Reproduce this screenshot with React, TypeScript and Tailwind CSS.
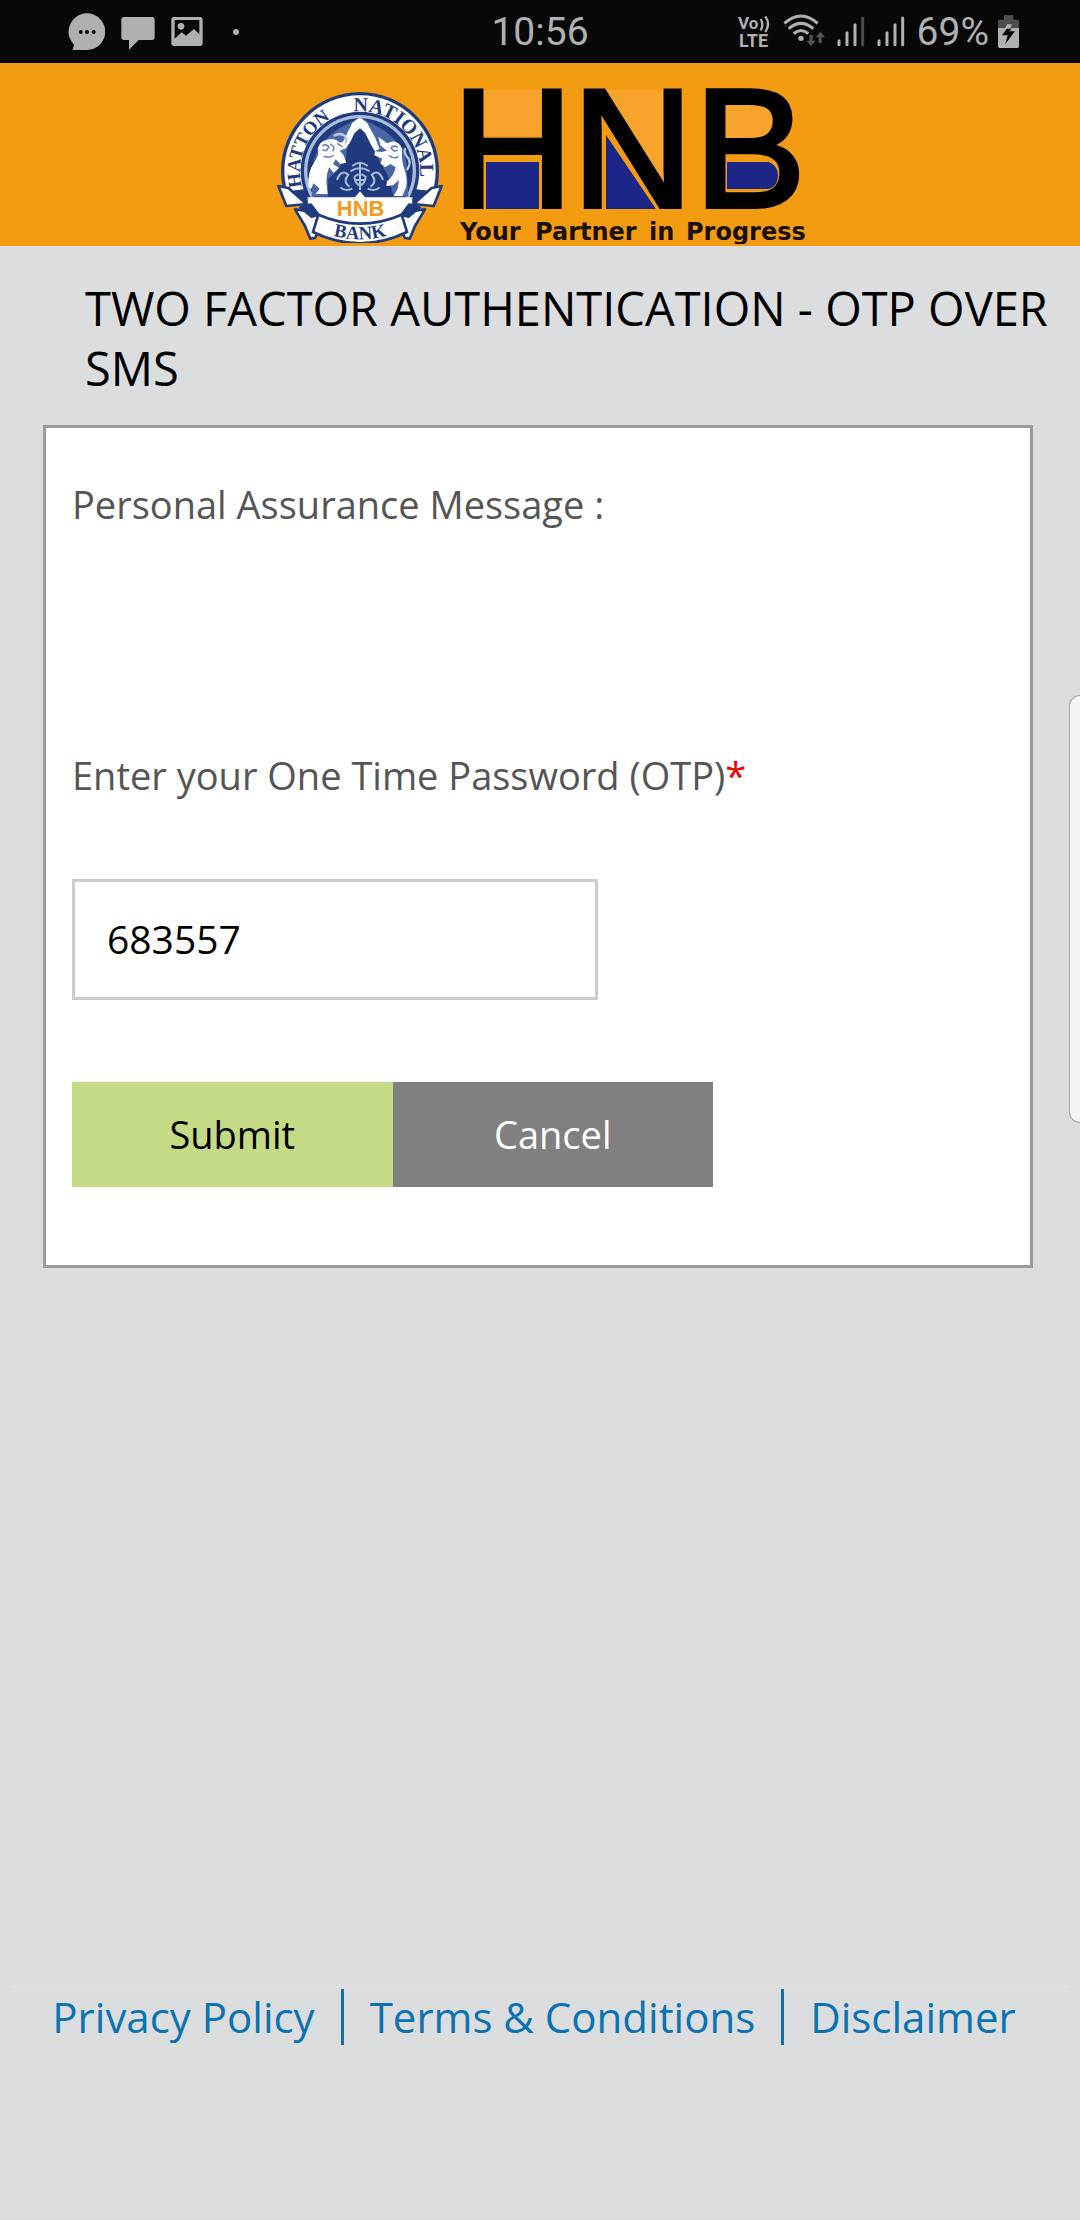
import React from "react";

const NAVY = "#1f3a7d";

function ChatBubbleIcon() {
  return (
    <svg className="h-[63px] w-[37px]" viewBox="84 0 111 189" aria-hidden="true">
      <path d="M98 150 L102 134 A55 55 0 1 1 140 150 Z" fill="#b0b0b0" />
      <circle cx="122" cy="96" r="6" fill="#080808" />
      <circle cx="141" cy="96" r="6" fill="#080808" />
      <circle cx="161" cy="96" r="6" fill="#080808" />
    </svg>
  );
}

function MessageIcon() {
  return (
    <svg className="h-[63px] w-[34px]" viewBox="240 0 102 189" aria-hidden="true">
      <path d="M249 51 H333 Q341 51 341 59 V112 Q341 120 333 120 H293 L264 149 V120 H249 Q241 120 241 112 V59 Q241 51 249 51 Z" fill="#b0b0b0" />
    </svg>
  );
}

function PictureIcon() {
  return (
    <svg className="h-[63px] w-[32px]" viewBox="393 0 96 189" aria-hidden="true">
      <path
        fillRule="evenodd"
        fill="#b0b0b0"
        d="M402 51 H480 Q488 51 488 59 V130 Q488 138 480 138 H402 Q394 138 394 130 V59 Q394 51 402 51 Z M404 60 V116 L425 97 L438 107 L462 87 L478 103 V60 Z"
      />
      <circle cx="423" cy="79" r="10" fill="#b0b0b0" />
    </svg>
  );
}

function VolteIcon() {
  return (
    <svg className="h-[63px] w-[33px]" viewBox="54 0 99 189" role="img" aria-label="VoLTE">
      <g fill="#b0b0b0" fontFamily="Roboto, sans-serif" fontWeight="700">
        <text x="54" y="87" fontSize="51">Vo</text>
        <text x="57" y="141" fontSize="54">LTE</text>
      </g>
      <path d="M122 57 Q132 74 122 91 M136 49 Q152 72 136 96" fill="none" stroke="#b0b0b0" strokeWidth="7" />
    </svg>
  );
}

function WifiIcon() {
  return (
    <svg className="h-[63px] w-[42px]" viewBox="196 0 126 189" aria-hidden="true">
      <g fill="none" stroke="#b0b0b0" strokeWidth="9">
        <path d="M200 70 Q250 26 300 70" />
        <path d="M213 86 Q250 54 287 86" />
        <path d="M228 101 Q250 82 272 101" />
      </g>
      <circle cx="250" cy="115" r="8" fill="#b0b0b0" />
      <path d="M276 105 H285 V122 H294 L280 138 L266 122 H276 Z M303 129 H312 V112 H322 L308 95 L294 112 H303 Z" fill="#555" />
    </svg>
  );
}

function SignalIcon({ last }: { last: string }) {
  return (
    <svg className="h-[63px] w-[28px]" viewBox="347 0 84 189" aria-hidden="true">
      <g strokeWidth="9" strokeLinecap="round" stroke="#b0b0b0">
        <path d="M353 122 V134" />
        <path d="M377 98 V134" />
        <path d="M401 74 V134" />
        <path d="M424 54 V134" stroke={last} />
      </g>
    </svg>
  );
}

function BatteryIcon() {
  return (
    <svg className="h-[63px] w-[21px]" viewBox="831 0 63 189" aria-hidden="true">
      <path d="M849 45 H877 V59 H890 Q894 59 894 63 V84 H831 V63 Q831 59 835 59 H849 Z" fill="#4c4c4c" />
      <path d="M831 84 H894 V139 Q894 144 889 144 H836 Q831 144 831 139 Z" fill="#b0b0b0" />
      <path d="M859 84 H871 L867 94 H882 L853 132 L860 106 H843 Z" fill="#080808" />
      <path d="M858 73 H873 L868 86 H852 Z" fill="#b0b0b0" />
    </svg>
  );
}

function Ribbon() {
  return (
    <g stroke={NAVY} strokeWidth="8" strokeLinejoin="round">
      <path d="M90 388 L150 396 L172 430 L150 474 L136 476 L120 438 Z" fill="#fff" />
      <path d="M40 318 L70 324 L84 336 L122 332 L124 372 L64 378 Z" fill="#fff" />
      <path d="M84 336 L122 332 L124 372 L100 350 Z" fill={NAVY} />
      <path d="M106 382 L138 374 L160 404 L140 410 Z" fill={NAVY} />
    </g>
  );
}

function LionLeft() {
  return (
    <g>
      <path
        fill="#fff"
        d="M158 206 Q164 184 184 180 Q208 172 224 188 L250 180 L244 204 L224 212 L236 226 L244 248 L226 252 L212 238 L204 252 L222 264 L206 278 L192 262 Q184 284 184 304 L188 342 H152 L164 326 L146 310 L138 328 L130 318 Q128 276 146 250 Q158 232 160 220 Z"
      />
      <g fill="none" stroke="#6f88ba" strokeWidth="5">
        <path d="M172 198 Q182 190 192 200 L184 212 L172 210" />
        <path d="M196 192 Q212 200 204 214 M216 190 L232 200" />
        <path d="M176 228 Q190 236 206 226" />
      </g>
      <path d="M206 168 Q226 156 240 168 Q248 180 240 190" fill="none" stroke="#b9c8e2" strokeWidth="7" />
    </g>
  );
}

function LionRight() {
  return (
    <g>
      <path
        fill="#fff"
        d="M412 208 Q404 186 384 184 L366 190 L340 170 L346 196 L366 212 L350 216 L330 214 L328 226 L352 236 L346 250 L360 262 L376 252 L392 262 Q386 290 366 304 L364 318 L384 316 L402 300 L398 326 L386 348 H412 L424 320 Q428 290 416 262 Q408 236 412 208 Z"
      />
      <g fill="none" stroke="#6f88ba" strokeWidth="5">
        <path d="M398 202 Q386 194 378 204 L388 214 L398 210" />
        <path d="M372 226 Q386 238 400 230" />
      </g>
      <path d="M426 270 Q442 246 426 230 Q416 220 420 204" fill="none" stroke="#b9c8e2" strokeWidth="7" />
    </g>
  );
}

function Seal() {
  return (
    <g transform="translate(265 80) scale(0.33333)">
      <g clipPath="url(#seal-clip)">
        <g clipPath="url(#disc-clip)">
          <circle cx="285" cy="273" r="237" fill={NAVY} />
          <circle cx="285" cy="273" r="227" fill="#fff" />
          <circle cx="285" cy="273" r="178" fill={NAVY} />
          <circle cx="285" cy="273" r="168" fill="#a9bcdc" />
          <circle cx="285" cy="273" r="158" fill={NAVY} />
        </g>
        <path d="M285 112 L330 136 Q400 170 424 240 L430 350 H140 L146 240 Q170 170 240 136 Z" fill="#4a66a3" />
        <path d="M285 112 L306 128 L330 172 L344 206 L330 214 L285 150 L240 206 L232 190 L262 128 Z" fill="#fff" />
        <path d="M285 145 L300 158 L328 214 L340 236 L368 286 L386 350 H188 L190 296 L214 276 L242 236 L246 208 L268 160 Z" fill={NAVY} />
        <LionLeft />
        <LionRight />
        <g fill="none" stroke="#a9bcdc" strokeWidth="6">
          <path d="M216 300 Q228 266 250 284 Q232 306 254 320 M226 322 Q240 336 262 326" />
          <path d="M354 300 Q342 266 320 284 Q338 306 316 320 M344 322 Q330 336 308 326" />
          <path d="M262 258 Q285 238 308 258 M256 274 Q285 254 314 274 M268 290 Q285 276 302 290 Q300 312 285 316 Q270 312 268 290" />
          <path d="M270 300 L300 300 M285 250 V330" />
        </g>
        <path d="M118 352 H270 L285 334 L300 352 H452 Q410 436 285 438 Q160 436 118 352 Z" fill="#fff" />
        <path d="M122 368 Q170 434 285 436 Q400 434 448 368" fill="none" stroke={NAVY} strokeWidth="8" />
        <Ribbon />
        <g transform="translate(570 0) scale(-1 1)">
          <Ribbon />
        </g>
        <path d="M160 404 Q285 458 410 404 L426 456 Q285 524 144 456 Z" fill="#fff" stroke={NAVY} strokeWidth="8" />
        <g fill={NAVY} fontFamily="Liberation Serif, serif" fontWeight="700">
          <text fontSize="56">
            <textPath href="#seal-arc">HATTON</textPath>
          </text>
          <text fontSize="60">
            <textPath href="#seal-arc" startOffset="310">NATIONAL</textPath>
          </text>
          <text fontSize="56">
            <textPath href="#bank-arc" startOffset="50%" textAnchor="middle">BANK</textPath>
          </text>
        </g>
        <text x="287" y="407" textAnchor="middle" fontSize="66" fontWeight="700" fontFamily="Liberation Sans, sans-serif" fill="#f39c1f">
          HNB
        </text>
      </g>
    </g>
  );
}

function BankLogo() {
  return (
    <svg className="h-[156px] w-[536px] max-w-full" viewBox="272 88 536 156" role="img" aria-label="Hatton National Bank, HNB">
      <defs>
        <path id="seal-arc" d="M 111 320 A 180 180 0 1 1 459 320" />
        <path id="bank-arc" d="M 180 460 Q 285 496 390 460" />
        <clipPath id="seal-clip">
          <rect x="0" y="0" width="570" height="489" />
        </clipPath>
        <clipPath id="disc-clip">
          <rect x="0" y="0" width="570" height="376" />
        </clipPath>
      </defs>
      <Seal />
      <g fill="#f8a42c">
        <path d="M476 90 H548 V136 H476 Z" />
        <path d="M600 90 H670 V190 Z" />
        <path d="M716 100 H774 Q782 108 782 122 Q782 138 774 144 H716 Z" />
      </g>
      <g fill="#1c2689">
        <path d="M486 162 H539 V209 H486 Z" />
        <path d="M606 135 V209 H656 Z" />
        <path d="M727 162 H769 Q778 166 778 175 Q778 186 769 189 H727 Z" />
      </g>
      <g fill="#000" stroke="#000" strokeWidth="4" fontFamily="Liberation Sans, sans-serif" fontSize="168">
        <text x="452" y="207">H</text>
        <text x="572" y="207">N</text>
        <text x="694" y="207">B</text>
      </g>
      <g fill="#1a1000" fontFamily="DejaVu Sans, sans-serif" fontWeight="700" fontSize="24">
        <text x="460" y="240">Your</text>
        <text x="535" y="240">Partner</text>
        <text x="649" y="240">in</text>
        <text x="686" y="240">Progress</text>
      </g>
    </svg>
  );
}

function StatusBar() {
  return (
    <div className="grid h-[63px] grid-cols-[1fr_auto_1fr] items-center bg-[#080808] font-[Roboto,sans-serif] text-[39px] text-[#b0b0b0]">
      <div className="flex items-center gap-4 pl-[68px]">
        <ChatBubbleIcon />
        <MessageIcon />
        <PictureIcon />
        <span className="ml-[14px] size-[6px] rounded-full bg-[#b0b0b0]" />
      </div>
      <time className="pt-0.5">10:56</time>
      <div className="flex items-center justify-end gap-3 pr-[61px]">
        <VolteIcon />
        <WifiIcon />
        <SignalIcon last="#4c4c4c" />
        <SignalIcon last="#b0b0b0" />
        <div className="flex items-center gap-[9px]">
          <span className="pt-0.5">69%</span>
          <BatteryIcon />
        </div>
      </div>
    </div>
  );
}

export default function App() {
  const [otp, setOtp] = React.useState("683557");

  return (
    <div className="relative flex min-h-screen flex-col overflow-x-hidden bg-[#dcdddf] font-['Open_Sans',sans-serif]">
      <StatusBar />

      <header className="flex justify-center bg-[#f39c12] pt-[25px] pb-[2px]">
        <BankLogo />
      </header>

      <main>
        <h1 className="mt-8 pr-6 pl-[85px] text-[47px] leading-[60px] text-black">
          TWO FACTOR AUTHENTICATION - OTP OVER SMS
        </h1>

        <form
          className="mt-[27px] mr-[47px] ml-[43px] border-3 border-[#9a9a9b] bg-white px-[26px] pt-[49px] pb-[78px] text-[38px] leading-[54px] text-[#555]"
          onSubmit={(e) => e.preventDefault()}
        >
          <p>Personal Assurance Message :</p>
          <label htmlFor="otp" className="mt-[217px] block">
            Enter your One Time Password (OTP)<span className="text-[#f00000]">*</span>
          </label>
          <input
            id="otp"
            type="text"
            inputMode="numeric"
            value={otp}
            onChange={(e) => setOtp(e.target.value)}
            className="mt-[77px] block h-[121px] w-[526px] max-w-full border-3 border-[#ccc] bg-white px-8 pb-0.5 text-[39px] text-black outline-none"
          />
          <div className="mt-[82px] flex max-w-[641px]">
            <button type="submit" className="h-[105px] flex-1 bg-[#c4da84] pb-0.5 text-black">
              Submit
            </button>
            <button type="button" className="h-[105px] flex-1 bg-[#808080] pb-0.5 text-white">
              Cancel
            </button>
          </div>
        </form>
      </main>

      <footer className="mx-[11px] mt-auto border-t-3 border-[#dfe0e2] pb-[175px]">
        <nav className="mt-px flex justify-center pr-3 text-[42px] leading-[56px] whitespace-nowrap text-[#0b73b1]">
          <a href="#privacy" className="border-r-3 border-[#0b73b1] pr-[26px]">
            Privacy Policy
          </a>
          <a href="#terms" className="border-r-3 border-[#0b73b1] px-[26px]">
            Terms &amp; Conditions
          </a>
          <a href="#disclaimer" className="pl-[26px]">
            Disclaimer
          </a>
        </nav>
      </footer>

      <div className="absolute top-[695px] right-0 h-[428px] w-[11px] rounded-l-xl border border-r-0 border-[#a6a9a9] bg-[#f3f5f4]" />
    </div>
  );
}
